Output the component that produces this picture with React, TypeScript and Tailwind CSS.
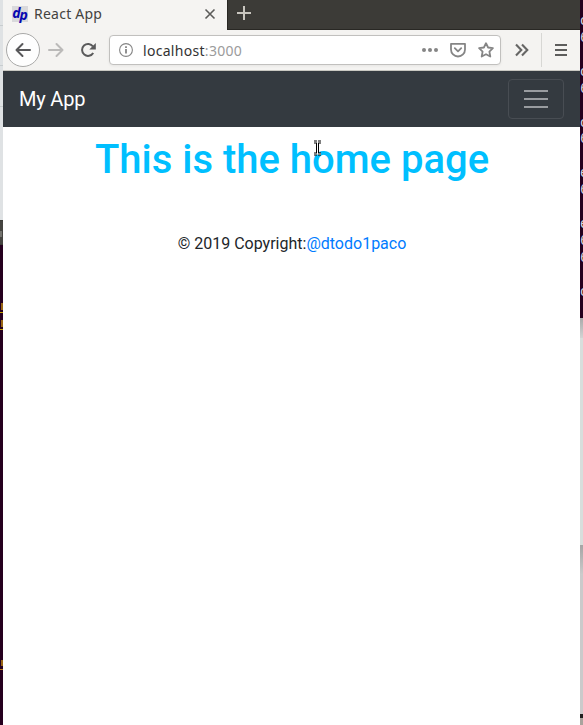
import React from "react";

const terminalRows = ["", "c", "6", "", "c", "6", "", "c", "6", "", "e", "6", "", "e", "6", "6", "", "c"];

function LeftEdge() {
  return (
    <aside className="flex w-[3px] shrink-0 flex-col overflow-hidden bg-[#25001e]">
      <div className="h-[220px] shrink-0 bg-[#dfe2e4]">
        <div className="h-[26px] border-b border-[#c8cdcf]" />
        <div className="h-[40px] border-b border-[#c8cdcf]" />
        <div className="h-[41px] border-b border-[#c8cdcf]" />
      </div>
      <div className="h-[25px] shrink-0 border-y border-[#3c3b37] bg-[#454440] pt-[10px]">
        <div className="h-[6px] w-[2px] bg-[#73736e]" />
      </div>
      <div className="mt-[58px] ml-px h-[7px] shrink-0 bg-[#986413]" />
      <div className="mt-[2px] h-px shrink-0 bg-[#c4a000]" />
      <div className="mt-[7px] ml-px h-[7px] shrink-0 bg-[#986413]" />
      <div className="mt-[2px] h-px shrink-0 bg-[#c4a000]" />
      <div className="mt-[330px] ml-px h-[6px] shrink-0 bg-[#986413]" />
      <div className="mt-[3px] h-px shrink-0 bg-[#bd7b16]" />
    </aside>
  );
}

function RightEdge() {
  return (
    <aside className="flex w-[3px] shrink-0 flex-col overflow-hidden bg-[#25001e]">
      <div className="h-[318px] shrink-0 overflow-hidden font-['Liberation_Mono',monospace] text-[14px] leading-[16.93px] text-[#d8d8e0]">
        {terminalRows.map((t, i) => (
          <div key={i} className="h-[16.93px] first:h-[13px]">{t}</div>
        ))}
      </div>
      <div className="h-[20px] shrink-0 bg-linear-to-b from-[#aaa] to-[#d2d4d4]" />
      <div className="h-[207px] shrink-0 bg-[#d8dedc]" />
      <div className="h-[30px] shrink-0 bg-linear-to-b from-[#a5a5a5] to-[#cccccc]" />
      <div className="h-[139px] shrink-0 bg-[#cbcacb]" />
      <div className="h-[4px] shrink-0 bg-[#202020]" />
      <div className="h-[7px] shrink-0 bg-[#a9a39d]" />
    </aside>
  );
}

function TabStrip() {
  return (
    <div className="flex h-[30px] shrink-0 bg-[#3c3b37]">
      <div className="flex w-[224px] items-center bg-[#f5f4f2] pl-[9px]">
        <span className="-mt-[2px] flex h-4 w-4 items-center justify-center bg-[#d9d9dc] font-['Open_Sans',sans-serif] text-[14px] leading-4 font-bold tracking-[-1px] text-[#0808b0] italic">
          <span className="-mt-[3px] -ml-px inline-block">d</span>
          <span className="mt-[1px] inline-block">p</span>
        </span>
        <span className="ml-[6px] -mt-[3px] inline-block text-[14px] tracking-[0.24px] text-[#43423f]">React App</span>
        <svg className="-mt-[2px] mr-[11px] ml-auto h-3 w-3" viewBox="0 0 12 12" fill="none" stroke="#5c5c5a" strokeWidth="1.6">
          <path d="M1.5 1.5 10.5 10.5M10.5 1.5 1.5 10.5" />
        </svg>
      </div>
      <div className="flex flex-1 border-b border-l border-[#292824] pt-[6px] pl-[9px]">
        <svg className="h-[14px] w-[14px]" viewBox="0 0 14 14" fill="none" stroke="#c8c5be" strokeWidth="2">
          <path d="M7 0V14M0 7H14" />
        </svg>
      </div>
    </div>
  );
}

function Toolbar() {
  return (
    <div className="flex h-[41px] shrink-0 items-center border-b border-[#c9c8c2] bg-[#f4f3f1]">
      <span className="ml-[3px] flex h-[34px] w-[34px] shrink-0 items-center justify-center rounded-full border border-[#a9a9a8] bg-[#fefefe]">
        <svg className="h-4 w-4" viewBox="0 0 16 16" fill="none" stroke="#58585a" strokeWidth="2" strokeLinecap="round" strokeLinejoin="round">
          <path d="M15 8H1.5M7.5 2 1.5 8l6 6" />
        </svg>
      </span>
      <svg className="ml-2 h-4 w-4 shrink-0" viewBox="0 0 16 16" fill="none" stroke="#bbbab9" strokeWidth="2" strokeLinecap="round" strokeLinejoin="round">
        <path d="M1 8h13.5M8.5 2l6 6-6 6" />
      </svg>
      <svg className="ml-4 h-4 w-4 shrink-0" viewBox="0 0 16 16" fill="none" stroke="#5a5a5b" strokeWidth="2">
        <path d="M13 4.5A6 6 0 1 0 13.2 11" />
        <path d="M15.8 1v6.5H9.3z" fill="#5a5a5b" stroke="none" />
      </svg>
      <div className="ml-[13px] flex h-[30px] w-[392px] shrink-0 items-center rounded-[4px] border border-[#c1c0be] bg-white shadow-[0_1px_3px_rgba(0,0,0,0.06)]">
        <svg className="ml-[9px] h-[14px] w-[14px]" viewBox="0 0 14 14" fill="none" stroke="#858585" strokeWidth="1.1">
          <circle cx="7" cy="7" r="6.4" />
          <path d="M7 6v4.5M7 3.2v1.7" strokeWidth="1.8" />
        </svg>
        <span className="ml-[10px] inline-block text-[14px] tracking-[0.3px] text-[#333]">
          localhost<span className="text-[#9b9b9b]">:3000</span>
        </span>
        <svg className="ml-auto h-4 w-4" viewBox="0 0 16 16" fill="#858585">
          <circle cx="2" cy="8" r="2" />
          <circle cx="8" cy="8" r="2" />
          <circle cx="14" cy="8" r="2" />
        </svg>
        <svg className="ml-3 h-4 w-4" viewBox="0 0 16 16" fill="none" stroke="#858585" strokeWidth="1.8" strokeLinecap="round" strokeLinejoin="round">
          <path d="M1 1.8h14v5.7a7 7 0 0 1-14 0z" />
          <path d="M4.8 6.2 8 9.3l3.2-3.1" />
        </svg>
        <svg className="mr-[6px] ml-3 h-4 w-4" viewBox="0 0 16 16" fill="none" stroke="#858585" strokeWidth="1.8" strokeLinejoin="round">
          <path d="m8 1.2 2.1 4.3 4.8.7-3.5 3.4.9 4.9L8 12.2l-4.3 2.3.9-4.9L1.1 6.2l4.8-.7z" />
        </svg>
      </div>
      <svg className="ml-[14px] h-[14px] w-[14px] shrink-0" viewBox="0 0 14 14" fill="none" stroke="#666665" strokeWidth="2.1">
        <path d="m1 1.5 5.3 5.5L1 12.5M7 1.5l5.3 5.5L7 12.5" />
      </svg>
      <span className="ml-3 h-[34px] w-px shrink-0 bg-[#d7d7d4]" />
      <svg className="ml-[13px] h-[12px] w-[12px] shrink-0" viewBox="0 0 12 12" stroke="#5d5d5c" strokeWidth="2">
        <path d="M0 1h12M0 6h12M0 11h12" />
      </svg>
    </div>
  );
}

function Page() {
  return (
    <div className="flex-1 bg-white font-['Roboto',sans-serif] text-[16px] leading-6 text-[#212529]">
      <nav className="flex h-14 items-center justify-between bg-[#343a40] px-4">
        <span className="text-[20px] leading-[30px] tracking-[-0.2px] text-white">My App</span>
        <button aria-label="Toggle navigation" className="flex h-10 w-14 items-center justify-center rounded-[4px] border border-[#484d53]">
          <svg className="h-[30px] w-[30px]" viewBox="0 0 30 30" stroke="#999ca0" strokeWidth="2" strokeLinecap="square">
            <path d="M4 7h22M4 15h22M4 23h22" />
          </svg>
        </button>
      </nav>
      <main className="relative pt-[9px] pl-px text-center">
        <h1 className="text-[40px] leading-[48px] font-medium text-[#00bfff]">This is the home page</h1>
        <svg className="absolute top-[12px] left-[310px] h-[18px] w-[9px]" viewBox="0 0 9 18" fill="none">
          <path d="M1 3h3M5 3h3M4.5 3v11M1 15h3M5 15h3" stroke="#000" strokeWidth="3" />
          <path d="M4.5 3v11" stroke="#000" strokeWidth="3" />
          <path d="M1 3h7M4.5 3v12M1 15h7" stroke="#fff" />
        </svg>
      </main>
      <footer className="pt-[48px] pl-px text-center">
        © 2019 Copyright:<a className="text-[#007bff]">@dtodo1paco</a>
      </footer>
    </div>
  );
}

export default function App() {
  return (
    <div className="flex h-[725px] w-[583px] overflow-hidden font-['Noto_Sans',sans-serif]">
      <LeftEdge />
      <div className="flex w-[577px] shrink-0 flex-col">
        <TabStrip />
        <Toolbar />
        <Page />
      </div>
      <RightEdge />
    </div>
  );
}
